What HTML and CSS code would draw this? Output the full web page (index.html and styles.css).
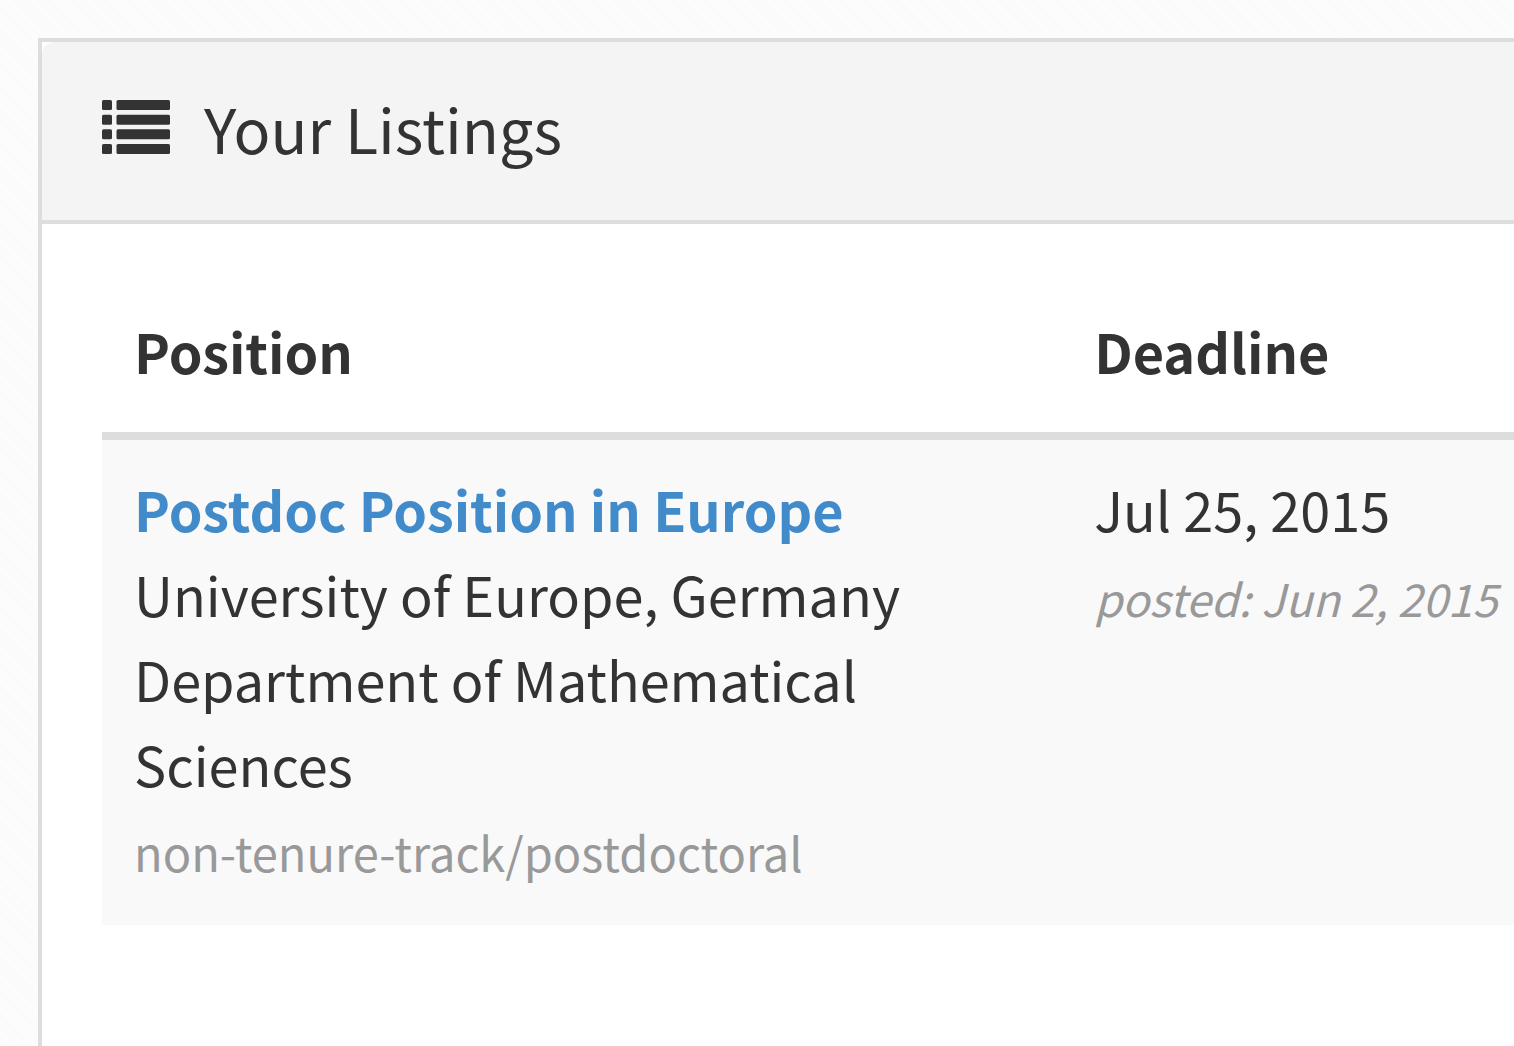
FILE: index.html
```html
<!DOCTYPE html>
<html lang="en">
<head>
    <meta charset="UTF-8">
    <meta name="viewport" content="width=device-width, initial-scale=1.0">
    <title>Your Listings</title>
    <link rel="stylesheet" href="styles.css">
</head>
<body>
    <main class="panel">
        <header class="panel-heading">
            <!-- List icon -->
            <svg class="icon" viewBox="0 0 68 54" aria-hidden="true">
                <rect x="0" y="0" width="10" height="10" rx="1.5"/>
                <rect x="14.5" y="0" width="53.5" height="10" rx="1.5"/>
                <rect x="0" y="14.7" width="10" height="10" rx="1.5"/>
                <rect x="14.5" y="14.7" width="53.5" height="10" rx="1.5"/>
                <rect x="0" y="29.3" width="10" height="10" rx="1.5"/>
                <rect x="14.5" y="29.3" width="53.5" height="10" rx="1.5"/>
                <rect x="0" y="44" width="10" height="10" rx="1.5"/>
                <rect x="14.5" y="44" width="53.5" height="10" rx="1.5"/>
            </svg>
            <h1>Your Listings</h1>
        </header>

        <div class="panel-body">
            <table class="listings">
                <thead>
                    <tr>
                        <th class="col-position" scope="col">Position</th>
                        <th scope="col">Deadline</th>
                    </tr>
                </thead>
                <tbody>
                    <tr>
                        <td>
                            <a class="listing-title" href="#">Postdoc Position in Europe</a>
                            <div>University of Europe, Germany</div>
                            <div>Department of Mathematical Sciences</div>
                            <div><small>non-tenure-track/postdoctoral</small></div>
                        </td>
                        <td class="deadline">
                            <div>Jul 25, 2015</div>
                            <div><small class="posted">posted: Jun 2, 2015</small></div>
                        </td>
                    </tr>
                </tbody>
            </table>
        </div>
    </main>
</body>
</html>
```
FILE: styles.css
```css
* {
    box-sizing: border-box;
}

body {
    margin: 0;
    padding: 38px 0 0 38px;
    min-height: 100vh;
    display: flex;
    flex-direction: column;
    font-family: "Source Sans Pro", "Noto Sans CJK SC", sans-serif;
    font-size: 54px;
    line-height: 85px;
    color: #333;
    /* faint diagonal paper texture */
    background: repeating-linear-gradient(45deg, #fcfcfc 0, #fcfcfc 4px, #fafafa 6px, #fcfcfc 8px);
}

.panel {
    flex: 1;
    background-color: #fff;
    border: 4px solid #ddd;
    border-right: none;
    border-bottom: none;
}

.panel-heading {
    display: flex;
    align-items: center;
    gap: 34px;
    padding: 37px 60px 43px;
    background-color: #f4f4f4;
    border-bottom: 4px solid #ddd;
    border-top-left-radius: 12px;
}

.icon {
    width: 68px;
    height: 54px;
    margin-bottom: 2px;
    fill: #333;
}

h1 {
    margin: 0;
    font-size: 61px;
    font-weight: normal;
    line-height: 98px;
}

.panel-body {
    padding: 60px 0 60px 60px;
}

/* Listings table */
.listings {
    width: 100%;
    border-spacing: 0;
}

.listings th,
.listings td {
    padding: 26px 32px 34px;
    text-align: left;
    vertical-align: top;
}

.listings thead th {
    padding-top: 24px;
    padding-bottom: 39px;
    border-bottom: 8px solid #ddd;
}

.listings tbody tr {
    background-color: #f9f9f9;
}

.listings .col-position {
    width: 68%;
}

.listings .deadline {
    padding-right: 0;
    white-space: nowrap;
}

.listing-title {
    color: #428bca;
    font-weight: bold;
    text-decoration: none;
}

.listing-title:hover {
    text-decoration: underline;
}

small {
    font-size: 47px;
    line-height: 1;
    color: #999;
}

.posted {
    font-size: 45px;
    font-style: italic;
}
```
